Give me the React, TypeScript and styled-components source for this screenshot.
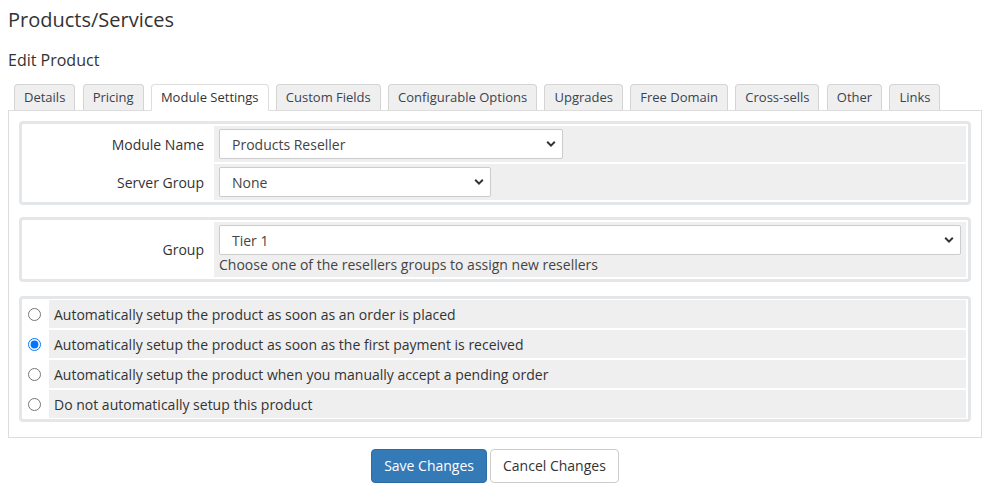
import React from "react";
import styled, { createGlobalStyle } from "styled-components";

const Global = createGlobalStyle`
  html, body { margin: 0; padding: 0; background: #fff; }
  body {
    font-family: "Open Sans", "Liberation Sans", Arial, sans-serif;
    font-size: 14px;
    color: #333;
  }
  * { box-sizing: border-box; }
`;

const Page = styled.div`
  padding: 0 9px 0 8px;
`;

const Title = styled.h1`
  margin: 0;
  padding-top: 6px;
  font-size: 20px;
  font-weight: 400;
  line-height: 28px;
  color: #333;
`;

const SubTitle = styled.h2`
  margin: 0;
  padding-top: 14px;
  font-size: 16px;
  font-weight: 400;
  line-height: 24px;
  color: #333;
`;

const TabBar = styled.ul`
  list-style: none;
  margin: 12px 0 0;
  padding: 0 0 0 6px;
  display: flex;
  gap: 7.3px;
  position: relative;
  z-index: 1;
`;

const Tab = styled.li<{ $active?: boolean }>`
  padding: 0 9px;
  font-size: 13px;
  line-height: 24px;
  border: 1px solid ${(p) => (p.$active ? "#ddd" : "#d4d4d4")};
  border-bottom: ${(p) => (p.$active ? "1px solid #fff" : "none")};
  border-radius: 4px 4px 0 0;
  background: ${(p) => (p.$active ? "#fff" : "#efefef")};
  color: ${(p) => (p.$active ? "#333" : "#3a4350")};
  margin-bottom: ${(p) => (p.$active ? "-1px" : "0")};
  height: ${(p) => (p.$active ? "27px" : "26px")};
  white-space: nowrap;
`;

const TabContent = styled.div`
  border: 1px solid #ddd;
  padding: 10px 10px 15px;
  display: flex;
  flex-direction: column;
  gap: 12px;
`;

const FormTable = styled.div<{ $pad?: number; $mt?: number }>`
  border: 3px solid #e3e7ea;
  border-radius: 4px;
  padding: ${(p) => (p.$pad ?? 2)}px 2px;
  margin-top: ${(p) => p.$mt ?? 0}px;
  display: flex;
  flex-direction: column;
  gap: 2px;
`;

const Row = styled.div<{ $label: number }>`
  display: grid;
  grid-template-columns: ${(p) => p.$label}px 1fr;
  gap: 2px;
`;

const LabelCell = styled.div`
  background: #fff;
  text-align: right;
  padding-right: 8px;
  display: flex;
  align-items: center;
  justify-content: flex-end;
  font-size: 14px;
  color: #333;
`;

const RadioCell = styled.div`
  background: #fff;
  display: flex;
  align-items: center;
  justify-content: center;
  padding-right: 2px;
`;

const FieldCell = styled.div`
  background: #efefef;
  padding: 3px 5px;
  display: flex;
  flex-direction: column;
  justify-content: center;
`;

const SelectWrap = styled.div<{ $w?: number }>`
  position: relative;
  width: ${(p) => (p.$w ? `${p.$w}px` : "100%")};
  height: 30px;
  border: 1px solid #ccc;
  border-radius: 2px;
  background: #fff;
  display: flex;
  align-items: center;
  padding-left: 12px;
  font-size: 14px;
  color: #444;
`;

const Chevron = styled.svg`
  position: absolute;
  right: 6px;
  top: 50%;
  margin-top: -4px;
  width: 10px;
  height: 8px;
`;

const HelpText = styled.div`
  font-size: 14px;
  color: #444;
  line-height: 18px;
  padding-top: 1px;
`;

const RadioText = styled.label`
  background: #efefef;
  height: 28px;
  display: flex;
  align-items: center;
  padding-left: 5px;
  font-size: 14px;
  color: #333;
`;

const Radio = styled.input`
  margin: 0;
  width: 13px;
  height: 13px;
`;

const ButtonBar = styled.div`
  display: flex;
  justify-content: center;
  gap: 3px;
  padding-top: 11px;
`;

const Button = styled.button<{ $primary?: boolean }>`
  font-family: "Open Sans", "Liberation Sans", Arial, sans-serif;
  font-size: 14px;
  line-height: 20px;
  padding: 6px 12px;
  border-radius: 4px;
  border: 1px solid ${(p) => (p.$primary ? "#2e6da4" : "#ccc")};
  background: ${(p) => (p.$primary ? "#337ab7" : "#fff")};
  color: ${(p) => (p.$primary ? "#fff" : "#333")};
  cursor: pointer;
`;

const Select = ({ value, width }: { value: string; width?: number }) => (
  <SelectWrap $w={width}>
    {value}
    <Chevron viewBox="0 0 10 8">
      <path d="M1.2 1.8 L5 5.6 L8.8 1.8" fill="none" stroke="#333" strokeWidth="2" />
    </Chevron>
  </SelectWrap>
);

const tabs = [
  "Details",
  "Pricing",
  "Module Settings",
  "Custom Fields",
  "Configurable Options",
  "Upgrades",
  "Free Domain",
  "Cross-sells",
  "Other",
  "Links",
];

const options = [
  "Automatically setup the product as soon as an order is placed",
  "Automatically setup the product as soon as the first payment is received",
  "Automatically setup the product when you manually accept a pending order",
  "Do not automatically setup this product",
];

export default function App() {
  return (
    <>
      <Global />
      <Page>
        <Title>Products/Services</Title>
        <SubTitle>Edit Product</SubTitle>
        <TabBar>
          {tabs.map((t) => (
            <Tab key={t} $active={t === "Module Settings"}>
              {t}
            </Tab>
          ))}
        </TabBar>
        <TabContent>
          <FormTable>
            <Row $label={188}>
              <LabelCell>Module Name</LabelCell>
              <FieldCell>
                <Select value="Products Reseller" width={344} />
              </FieldCell>
            </Row>
            <Row $label={188}>
              <LabelCell>Server Group</LabelCell>
              <FieldCell>
                <Select value="None" width={272} />
              </FieldCell>
            </Row>
          </FormTable>
          <FormTable>
            <Row $label={188}>
              <LabelCell>Group</LabelCell>
              <FieldCell>
                <Select value="Tier 1" />
                <HelpText>Choose one of the resellers groups to assign new resellers</HelpText>
              </FieldCell>
            </Row>
          </FormTable>
          <FormTable $pad={1} $mt={2}>
            {options.map((o, i) => (
              <Row $label={23} key={o}>
                <RadioCell>
                  <Radio type="radio" name="autosetup" id={`as${i}`} defaultChecked={i === 1} />
                </RadioCell>
                <RadioText htmlFor={`as${i}`}>{o}</RadioText>
              </Row>
            ))}
          </FormTable>
        </TabContent>
        <ButtonBar>
          <Button $primary>Save Changes</Button>
          <Button>Cancel Changes</Button>
        </ButtonBar>
      </Page>
    </>
  );
}
